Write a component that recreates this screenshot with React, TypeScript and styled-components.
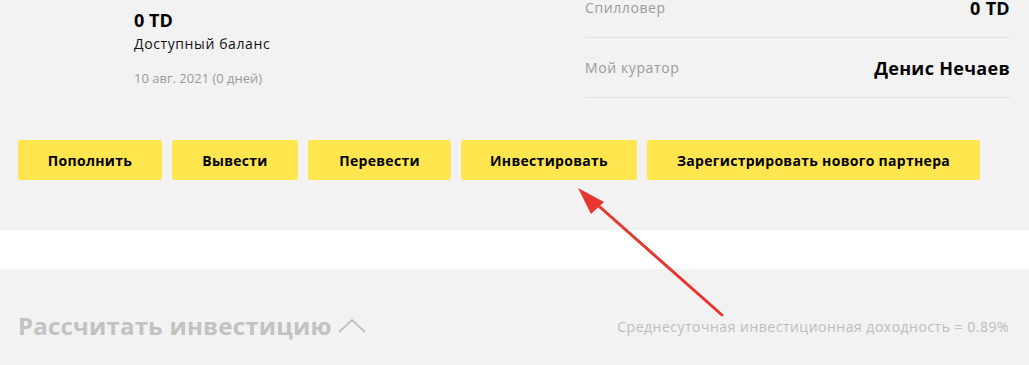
import React from "react";
import styled, { createGlobalStyle } from "styled-components";

const GlobalStyle = createGlobalStyle`
    html, body {
        margin: 0;
        padding: 0;
        background: #f2f2f2;
        font-family: "Open Sans", "Noto Sans", sans-serif;
        overflow: hidden;
    }
`;

const Page = styled.div`
    position: relative;
    width: 1029px;
    height: 365px;
    overflow: hidden;
`;

const Wallet = styled.section`
    background: #f2f2f2;
    margin-top: -22px;
    padding: 0 19px 50px 18px;
`;

const Summary = styled.div`
    display: flex;
    justify-content: space-between;
`;

const Balance = styled.div`
    padding: 31px 0 0 116px;
    display: flex;
    flex-direction: column;
`;

const Amount = styled.div`
    font-size: 18px;
    font-weight: 700;
    line-height: 22px;
    color: #000;
`;

const Caption = styled.div`
    font-size: 14px;
    line-height: 20px;
    letter-spacing: 0.6px;
    color: #111;
    margin-top: 3px;
`;

const DateLine = styled.div`
    font-size: 13px;
    line-height: 18px;
    color: #9a9a9a;
    margin-top: 15px;
`;

const Details = styled.div`
    width: 425px;
    display: flex;
    flex-direction: column;
`;

const DetailRow = styled.div`
    height: 59px;
    display: flex;
    align-items: center;
    justify-content: space-between;
    border-bottom: 1px solid #e0e0e0;
`;

const Label = styled.span`
    font-size: 14px;
    letter-spacing: 0.6px;
    color: #9a9a9a;
`;

const Value = styled.span`
    font-size: 18px;
    font-weight: 700;
    letter-spacing: 0.3px;
    color: #000;
`;

const Actions = styled.div`
    display: flex;
    gap: 10px;
    margin-top: 42px;
`;

const ActionButton = styled.button<{ $w: number }>`
    width: ${p => p.$w}px;
    height: 40px;
    border: none;
    border-radius: 3px;
    background: #ffe64f;
    font-family: inherit;
    font-size: 14px;
    font-weight: 700;
    letter-spacing: 0.3px;
    color: #000;
    cursor: pointer;
    padding: 0;
`;

const Gap = styled.div`
    height: 39px;
    background: #fff;
`;

const Calculator = styled.section`
    background: #f2f2f2;
    display: flex;
    align-items: center;
    justify-content: space-between;
    padding: 40px 20px 0 18px;
`;

const CalcTitle = styled.div`
    display: flex;
    align-items: center;
    gap: 6px;
    font-size: 24px;
    font-weight: 700;
    letter-spacing: 0.2px;
    color: #c2c2c2;
`;

const Yield = styled.div`
    font-size: 14px;
    letter-spacing: 0.5px;
    color: #bdbdbd;
    padding-top: 2px;
`;

const Pointer = styled.svg`
    position: absolute;
    left: 0;
    top: 0;
    pointer-events: none;
`;

const buttons: [string, number][] = [
    ["Пополнить", 144],
    ["Вывести", 126],
    ["Перевести", 143],
    ["Инвестировать", 176],
    ["Зарегистрировать нового партнера", 333],
];

const App = () => {
    return <Page>
        <GlobalStyle/>
        <Wallet>
            <Summary>
                <Balance>
                    <Amount>0 TD</Amount>
                    <Caption>Доступный баланс</Caption>
                    <DateLine>10 авг. 2021 (0 дней)</DateLine>
                </Balance>
                <Details>
                    <DetailRow>
                        <Label>Спилловер</Label>
                        <Value>0 TD</Value>
                    </DetailRow>
                    <DetailRow>
                        <Label>Мой куратор</Label>
                        <Value>Денис Нечаев</Value>
                    </DetailRow>
                </Details>
            </Summary>
            <Actions>
                {buttons.map(([title, w]) => <ActionButton key={title} $w={w}>{title}</ActionButton>)}
            </Actions>
        </Wallet>
        <Gap/>
        <Calculator>
            <CalcTitle>
                Рассчитать инвестицию
                <svg width="28" height="16" viewBox="0 0 28 16">
                    <path d="M1 14 L14 2 L27 14" fill="none" stroke="#c2c2c2" strokeWidth="2"/>
                </svg>
            </CalcTitle>
            <Yield>Среднесуточная инвестиционная доходность = 0.89%</Yield>
        </Calculator>
        {/* annotation arrow */}
        <Pointer width="1029" height="365" viewBox="0 0 1029 365">
            <line x1="722" y1="315" x2="592" y2="200" stroke="#e8352f" strokeWidth="3" strokeLinecap="round"/>
            <polygon points="578,188 604,202 591,214" fill="#e8352f"/>
        </Pointer>
    </Page>
}

export default App;
